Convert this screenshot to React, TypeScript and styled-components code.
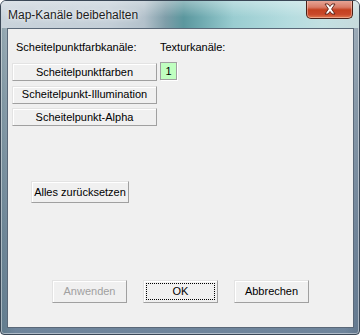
import React from "react";
import styled, { createGlobalStyle, css } from "styled-components";

const Global = createGlobalStyle`
    html, body {
        margin: 0;
        padding: 0;
        background: #ffffff;
    }
    * {
        box-sizing: border-box;
    }
`;

const Frame = styled.div`
    width: 360px;
    height: 335px;
    display: flex;
    flex-direction: column;
    border: 1px solid #3a4756;
    border-radius: 6px 6px 4px 4px;
    box-shadow: inset 0 0 0 1px rgba(255, 255, 255, 0.45);
    background:
        linear-gradient(90deg, rgba(70, 105, 110, 0.35) 0%, rgba(0, 0, 0, 0) 4%, rgba(0, 0, 0, 0) 96%, rgba(60, 80, 100, 0.25) 100%),
        linear-gradient(180deg, #bcc8d2 0%, #9aabba 30%, #7d91a6 70%, #6e849b 100%);
    font-family: "Liberation Sans", Arial, sans-serif;
    overflow: hidden;
`;

const TitleBar = styled.div`
    height: 27px;
    flex: none;
    display: flex;
    align-items: flex-start;
    padding-left: 7px;
    padding-right: 6px;
    background:
        linear-gradient(180deg, rgba(255, 255, 255, 0.35) 0%, rgba(255, 255, 255, 0) 60%),
        linear-gradient(90deg, #c9d3db 0%, #c4cfd8 30%, #b3c1cb 40%, #7e9ea9 46%, #5b979e 51%, #6faab0 56%, #9acdd1 65%, #b4dcdf 80%, #c3e0e2 90%, #c7dadd 100%);
`;

const Title = styled.span`
    font-size: 12px;
    line-height: 15px;
    margin-top: 7px;
    color: #1c1c1c;
    text-shadow: 0 0 6px rgba(255, 255, 255, 0.95), 0 0 2px rgba(255, 255, 255, 0.8);
    white-space: nowrap;
`;

const CloseButton = styled.div`
    margin-left: auto;
    margin-top: -1px;
    width: 47px;
    height: 19px;
    display: flex;
    align-items: center;
    justify-content: center;
    border: 1px solid #4a2017;
    border-top: none;
    border-radius: 0 0 5px 5px;
    background: linear-gradient(180deg, #e9aa9c 0%, #d97c67 40%, #c4401f 55%, #c9482a 80%, #e07a4f 100%);
    box-shadow: inset 0 0 0 1px rgba(255, 220, 210, 0.45);
`;

const Client = styled.div`
    flex: 1;
    margin: 0 5px 6px 6px;
    border: 1px solid #5a6878;
    background: #f0f0f0;
    display: flex;
    flex-direction: column;
    padding: 12px 0 24px 4px;
    font-size: 11px;
    color: #000;
`;

const ChannelGrid = styled.div`
    display: grid;
    grid-template-columns: 145px auto;
    column-gap: 3px;
    row-gap: 9px;
    align-items: start;
`;

const Label = styled.div<{ $indent?: number }>`
    line-height: 13px;
    padding-left: ${(p) => p.$indent ?? 0}px;
    white-space: nowrap;
`;

const ButtonStack = styled.div`
    display: flex;
    flex-direction: column;
    gap: 4.5px;
`;

const Button = styled.div<{ $w?: number; $h?: number; $disabled?: boolean; $focused?: boolean }>`
    width: ${(p) => p.$w ?? 145}px;
    height: ${(p) => p.$h ?? 18}px;
    display: flex;
    align-items: center;
    justify-content: center;
    border: 1px solid;
    border-color: #e3e3e3 #a0a0a0 #a0a0a0 #e3e3e3;
    box-shadow: inset 1px 1px 0 #ffffff;
    background: #f0f0f0;
    color: ${(p) => (p.$disabled ? "#a0a0a0" : "#000")};
    white-space: nowrap;
    line-height: 13px;
    ${(p) =>
        p.$focused &&
        css`
            outline: 1px dotted #000;
            outline-offset: -4px;
        `}
`;

const ChannelBox = styled.div`
    width: 17px;
    height: 18px;
    display: flex;
    align-items: center;
    justify-content: center;
    background: #c0ffc0;
    border: 1px solid #a0a0a0;
    box-shadow: 1px 1px 0 #ffffff;
    margin-top: -1px;
`;

const ResetRow = styled.div`
    margin-top: 55px;
    padding-left: 19px;
`;

const Footer = styled.div`
    margin-top: auto;
    display: flex;
    padding-left: 40px;
    gap: 16px;
`;

const CloseGlyph = () => (
    <svg width="14" height="12" viewBox="0 0 14 12">
        <path
            d="M2 1 L5 1 L7 3.5 L9 1 L12 1 L8.6 6 L12 11 L9 11 L7 8.5 L5 11 L2 11 L5.4 6 Z"
            fill="#ffffff"
            stroke="#5a1e12"
            strokeWidth="0.9"
            strokeLinejoin="round"
        />
    </svg>
);

export default function App() {
    return (
        <>
            <Global />
            <Frame>
                <TitleBar>
                    <Title>Map-Kanäle beibehalten</Title>
                    <CloseButton>
                        <CloseGlyph />
                    </CloseButton>
                </TitleBar>
                <Client>
                    <ChannelGrid>
                        <Label $indent={4}>Scheitelpunktfarbkanäle:</Label>
                        <Label>Texturkanäle:</Label>
                        <ButtonStack>
                            <Button>Scheitelpunktfarben</Button>
                            <Button>Scheitelpunkt-Illumination</Button>
                            <Button>Scheitelpunkt-Alpha</Button>
                        </ButtonStack>
                        <ChannelBox>1</ChannelBox>
                    </ChannelGrid>
                    <ResetRow>
                        <Button $w={98} $h={22}>Alles zurücksetzen</Button>
                    </ResetRow>
                    <Footer>
                        <Button $w={75} $h={23} $disabled>Anwenden</Button>
                        <Button $w={75} $h={23} $focused>OK</Button>
                        <Button $w={75} $h={23}>Abbrechen</Button>
                    </Footer>
                </Client>
            </Frame>
        </>
    );
}
